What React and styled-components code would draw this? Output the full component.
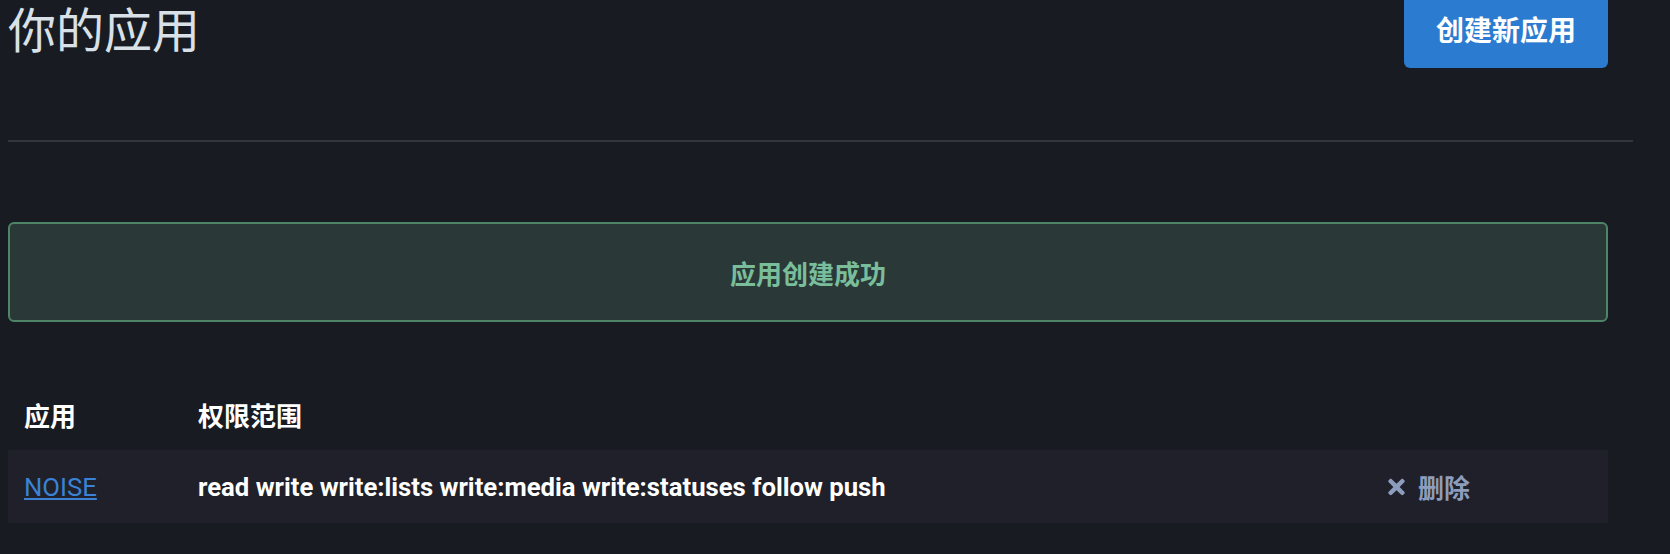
import React from "react";
import styled, { createGlobalStyle } from "styled-components";
import { FaTimes } from "react-icons/fa";

const apps = [
  {
    id: 1,
    name: "NOISE",
    scopes: "read write write:lists write:media write:statuses follow push",
  },
];

const App = () => {
  return (
    <>
      <GlobalStyle />
      <StPage>
        <StHeader>
          <StTitle>你的应用</StTitle>
          <StPrimaryButton>创建新应用</StPrimaryButton>
        </StHeader>
        <StDivider />
        <StFlash>应用创建成功</StFlash>
        <StTable>
          <colgroup>
            <col style={{ width: "174px" }} />
            <col />
            <col style={{ width: "236px" }} />
          </colgroup>
          <thead>
            <tr>
              <StTh>应用</StTh>
              <StTh>权限范围</StTh>
              <StTh />
            </tr>
          </thead>
          <tbody>
            {apps.map((app) => (
              <StRow key={app.id}>
                <StTd>
                  <StAppLink href="#">{app.name}</StAppLink>
                </StTd>
                <StTd $strong>{app.scopes}</StTd>
                <StTd>
                  <StDeleteLink href="#">
                    <FaTimes />
                    删除
                  </StDeleteLink>
                </StTd>
              </StRow>
            ))}
          </tbody>
        </StTable>
      </StPage>
    </>
  );
};

export default App;

const GlobalStyle = createGlobalStyle`
  html, body {
    margin: 0;
    background: #191b22;
  }
  body {
    font-family: Roboto, "Noto Sans CJK SC", sans-serif;
    color: #ffffff;
    overflow: hidden;
  }
`;

const StPage = styled.div`
  padding: 0 8px;
  width: 1625px;
`;

const StHeader = styled.div`
  display: flex;
  justify-content: space-between;
  align-items: flex-start;
  width: 1600px;
  margin-top: -10px;
`;

const StTitle = styled.h2`
  margin: 18px 0 0;
  font-size: 48px;
  font-weight: 400;
  line-height: 1;
  color: #d9e1e8;
`;

const StPrimaryButton = styled.button`
  width: 204px;
  height: 78px;
  padding: 0;
  border: 0;
  border-radius: 6px;
  background: #2b7bd0;
  color: #ffffff;
  font-family: inherit;
  font-size: 28px;
  font-weight: 700;
  cursor: pointer;
`;

const StDivider = styled.hr`
  margin: 72px 0 0;
  border: 0;
  border-top: 2px solid #34353f;
  width: 1625px;
`;

const StFlash = styled.div`
  box-sizing: border-box;
  margin-top: 80px;
  width: 1600px;
  height: 100px;
  display: flex;
  align-items: center;
  justify-content: center;
  border: 2px solid #4e8567;
  border-radius: 6px;
  background: #2a3937;
  color: #79bd9a;
  font-size: 26px;
  font-weight: 700;
`;

const StTable = styled.table`
  margin-top: 60px;
  width: 1600px;
  border-collapse: collapse;
  table-layout: fixed;
`;

const StTh = styled.th`
  height: 68px;
  padding: 0 16px 4px;
  box-sizing: border-box;
  text-align: left;
  font-size: 26px;
  font-weight: 700;
  color: #ffffff;
`;

const StRow = styled.tr`
  background: #1f2029;
`;

const StTd = styled.td`
  height: 73px;
  padding: 0 16px;
  font-size: 25.7px;
  font-weight: ${({ $strong }) => ($strong ? 700 : 400)};
  color: #ffffff;
  white-space: nowrap;
`;

const StAppLink = styled.a`
  color: #3b82d4;
  text-decoration: underline;
`;

const StDeleteLink = styled.a`
  display: inline-flex;
  align-items: center;
  gap: 13px;
  color: #8d9dbd;
  text-decoration: none;
  font-size: 26px;
  font-weight: 700;

  svg {
    width: 17px;
    height: 24px;
  }
`;
